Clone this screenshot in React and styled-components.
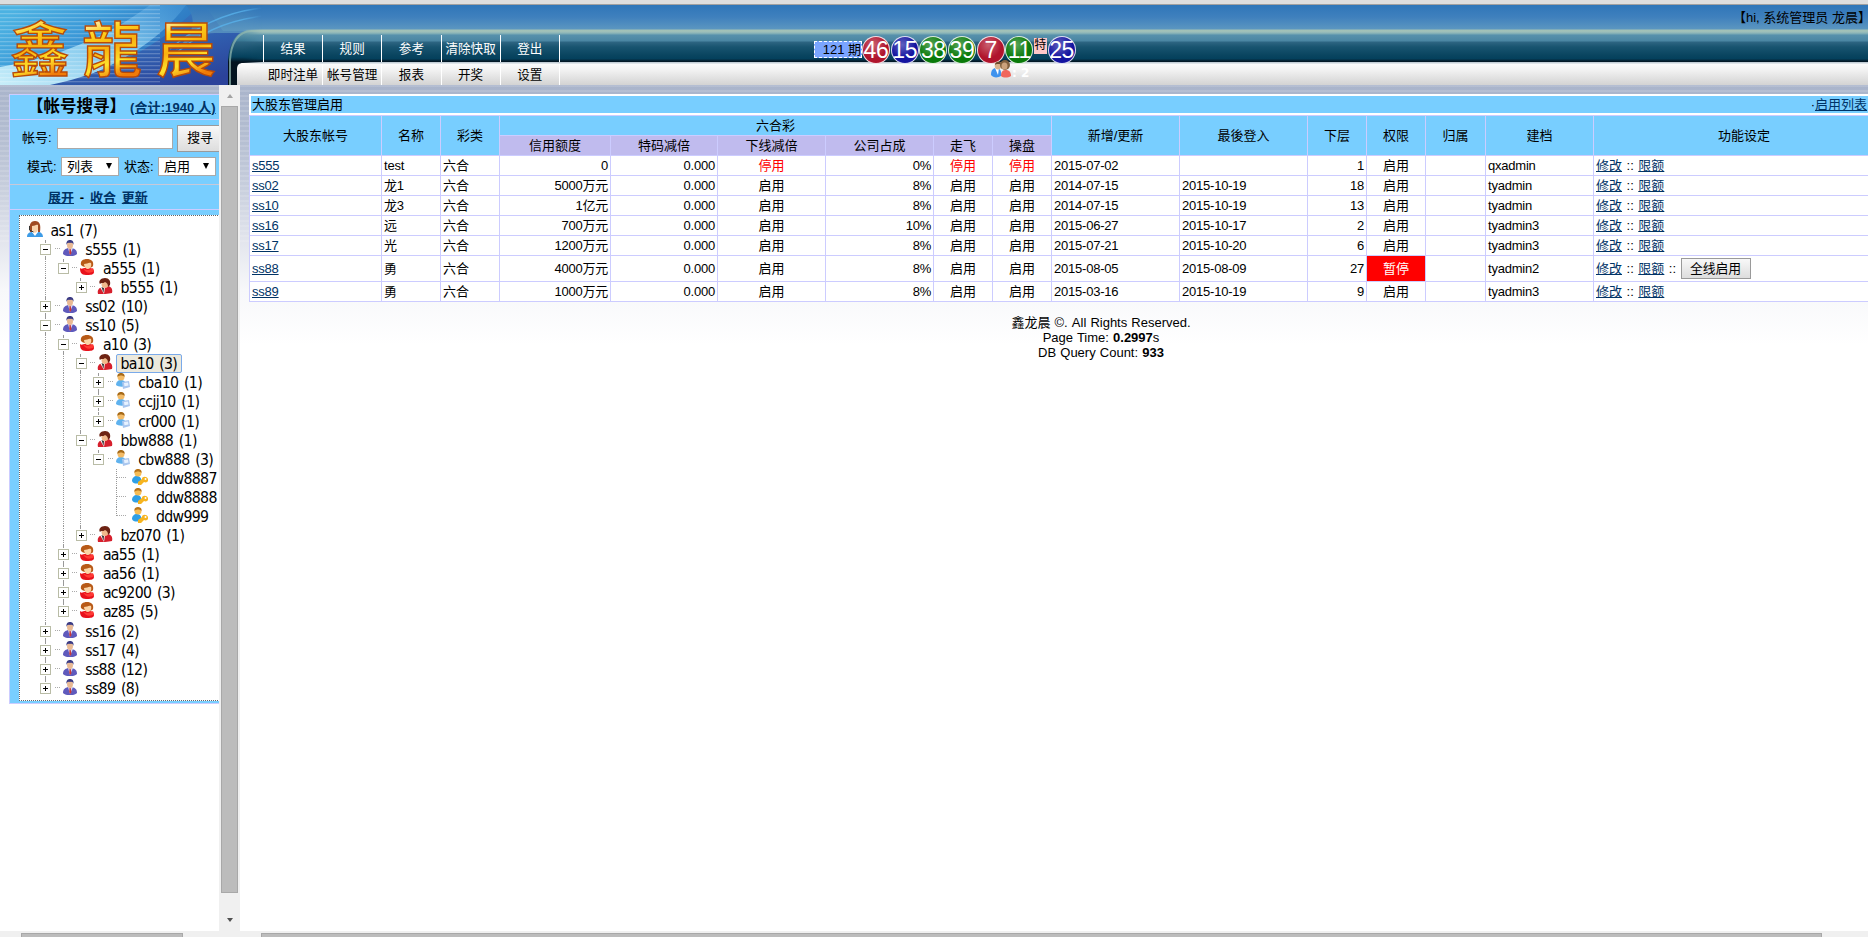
import React from 'react';
import styled, { createGlobalStyle, css } from 'styled-components';

const GlobalStyle = createGlobalStyle`
  * { box-sizing: border-box; }
  body {
    margin: 0;
    overflow: hidden;
    font: 13px/16px "Liberation Sans", "Noto Sans CJK SC", sans-serif;
    color: #000;
  }
`;

const Page = styled.div`
  width: 1868px;
  height: 937px;
  overflow: hidden;
  display: flex;
  flex-direction: column;
  background: #fff;
`;

/* ---------- header ---------- */
const TopEdge = styled.div`
  height: 5px;
  flex: none;
  background: #dedede;
  border-bottom: 1px solid #a0a0a0;
`;

const Header = styled.header`
  position: relative;
  height: 80px;
  flex: none;
  display: flex;
  background: linear-gradient(#2f76b9 0, #3f80bd 12px, #5b96c0 24px, #a3c2b6 25px, #9dbfba 27px, #78a9b4 29px, #5791ac 30px, #4a86a3 36px, #2e6582 37px, #185470 42px, #0a4560 50px, #04405c 54px, #052a3e 55px, #03131f 57px, #c3ced6 57px, #c3ced6 58px, #fbfbfb 59px, #f4f4f4 64px, #d3d3d3 80px);
`;

const LogoArt = styled.svg`
  display: block;
  overflow: visible;
  width: 263px;
  height: 80px;
  flex: none;
  mask: linear-gradient(90deg, #000 243px, transparent 262px);
`;

const Nav = styled.nav`
  display: flex;
  flex-direction: column;
  padding-top: 30px;
`;

const NavRow = styled.div`
  display: flex;
  height: ${(p) => (p.$sub ? 21 : 27)}px;
  margin-top: ${(p) => (p.$sub ? 2 : 0)}px;
  color: ${(p) => (p.$sub ? '#000' : '#fff')};
`;

const NavItem = styled.a`
  width: 59px;
  margin-right: 0.2px;
  border-left: 1px solid ${(p) => (p.$plain ? 'transparent' : '#fff')};
  display: flex;
  align-items: center;
  justify-content: center;
  white-space: nowrap;
  font-size: 12.6px;
`;

const NavEnd = styled.div`
  width: 1px;
  background: #fff;
`;

const Greeting = styled.div`
  position: absolute;
  left: 1733px;
  top: 5px;
  white-space: nowrap;
`;

const Draw = styled.div`
  position: absolute;
  left: 814px;
  top: 31px;
  display: flex;
  align-items: flex-start;
`;

const Issue = styled.div`
  width: 48px;
  height: 17px;
  margin-top: 5px;
  line-height: 15px;
  border: 1px dashed #fff;
  background: #7aa5ff;
  text-align: right;
`;

const ballColors = { red: '#b0142c', blue: '#1414a0', green: '#0a7a0a' };

const Ball = styled.div`
  width: 28px;
  height: 28px;
  margin-right: 0.7px;
  border-radius: 50%;
  border: 1px solid rgba(255, 255, 255, 0.85);
  background: radial-gradient(circle at 40% 30%, rgba(255, 255, 255, 0.32), rgba(255, 255, 255, 0) 55%), ${(p) => ballColors[p.$color]};
  color: #fff;
  font-size: 23px;
  line-height: 27px;
  letter-spacing: -0.3px;
  display: flex;
  justify-content: center;
`;

const Special = styled.div`
  width: 13px;
  height: 16px;
  flex: none;
  margin: 2px 0.5px 0 0;
  font-size: 12px;
  line-height: 15px;
  background: #ffc8c8;
`;

const Online = styled.div`
  position: absolute;
  left: 990px;
  top: 55px;
  display: flex;
  color: #fff;
  font: bold 12px/26px "DejaVu Sans", sans-serif;
`;

/* ---------- frames ---------- */
const Frames = styled.div`
  flex: 1;
  min-height: 0;
  display: flex;
`;

const frameBackground = css`
  background:
    repeating-linear-gradient(rgba(255, 255, 255, 0.13) 0 2px, rgba(255, 255, 255, 0) 2px 5px) 0 0 / 100% 160px no-repeat,
    linear-gradient(#a9b4cb 0, #b3bdd1 50px, #c6cddc 100px, #e2e5ed 155px, #f7f8fa 205px, #fff 260px);
`;

const LeftFrame = styled.aside`
  width: 240px;
  flex: none;
  display: flex;
  flex-direction: column;
`;

const LeftTop = styled.div`
  flex: 1;
  min-height: 0;
  display: flex;
`;

const LeftView = styled.div`
  width: 219px;
  overflow: hidden;
  padding: 9px 0 0 9px;
  ${frameBackground}
`;

const RightFrame = styled.main`
  width: 1628px;
  display: flex;
  flex-direction: column;
`;

const RightView = styled.div`
  flex: 1;
  overflow: hidden;
  padding: 9px 0 0 9px;
  ${frameBackground}
`;

const VBar = styled.div`
  width: 21px;
  background: #f0f0f0;
  display: flex;
  flex-direction: column;
  align-items: center;
  padding: 9px 0;
`;

const VThumb = styled.div`
  width: 17px;
  height: 787px;
  flex: none;
  margin: 8px 0 25px;
  background: #bcbcbc;
  border: 1px solid #a8a8a8;
`;

const Arrow = styled.div`
  border: 3.5px solid transparent;
  border-${(p) => (p.$up ? 'bottom' : 'top')}: 4px solid ${(p) => (p.$up ? '#a3a3a3' : '#505050')};
  border-${(p) => (p.$up ? 'top' : 'bottom')}: 0;
`;

const HBar = styled.div`
  height: 6px;
  flex: none;
  background: #f0f0f0;
  padding: 2px 0 0 21px;
  overflow: hidden;
`;

const HThumb = styled.div`
  width: ${(p) => p.$width}px;
  height: 12px;
  background: #bcbcbc;
  border: 1px solid #a8a8a8;
`;

/* ---------- search panel ---------- */
const Panel = styled.div`
  width: 240px;
  height: 610px;
  border: 1px solid #ccccff;
  background: #78ceff;
`;

const link = css`
  color: #003366;
  text-decoration: underline;
`;

const PanelTitle = styled.div`
  height: 25px;
  border-bottom: 1px solid #ccccff;
  display: flex;
  align-items: center;
  white-space: nowrap;
  font-weight: bold;
  font-size: 16.5px;
  padding: 0 0 3px 17px;
`;

const Total = styled.a`
  ${link}
  font-size: 13px;
  margin: 4px 0 0 4px;
  letter-spacing: 0.1px;
`;

const Form = styled.div`
  height: 65px;
  border-bottom: 1px solid #c8c8d8;
  padding-top: 4px;
`;

const FormRow = styled.div`
  display: flex;
  align-items: center;
  height: ${(p) => p.$height}px;
  padding-left: ${(p) => p.$left}px;
  white-space: nowrap;
`;

const Label = styled.span`
  width: ${(p) => p.$width}px;
`;

const Field = styled.div`
  width: 116px;
  height: 21px;
  background: #fff;
  border: 1px solid #a9a9a9;
`;

const Button = styled.div`
  height: ${(p) => p.$height}px;
  width: ${(p) => p.$width}px;
  display: flex;
  align-items: center;
  justify-content: center;
  font-size: 12.8px;
  border: 1px solid #9a9a9a;
  background: linear-gradient(#f8f8f8, #ddd);
`;

const Select = styled.div`
  width: 58px;
  height: 19px;
  background: #fff;
  border: 1px solid #a9a9a9;
  display: flex;
  align-items: center;
  justify-content: space-between;
  padding: 0 6px 0 5px;
`;

const Caret = styled.i`
  border: 3.5px solid transparent;
  border-top: 6px solid #000;
  border-bottom: 0;
  margin-top: -2px;
`;

const PanelLinks = styled.div`
  height: 25px;
  border-bottom: 1px solid #ccccff;
  padding-left: 38px;
  line-height: 26px;
  font-weight: bold;
  word-spacing: 2.2px;
  a { ${link} }
`;

/* ---------- tree ---------- */
const Tree = styled.div`
  margin: 5px 0 0 9px;
  height: 486px;
  border: 1px dotted #666;
  border-right: 0;
  background: #fff;
  padding: 5px 0 0 7px;
`;

const TreeRow = styled.div`
  display: flex;
  align-items: center;
  height: ${(p) => (p.$tall ? 20 : 19)}px;
  padding-top: ${(p) => (p.$tall ? 1 : 0)}px;
  padding-left: ${(p) => (p.$root ? 0 : 10)}px;
`;

const Guide = styled.span`
  width: 17.7px;
  height: 100%;
  flex: none;
  display: flex;
  align-items: center;
  justify-content: center;
  background: linear-gradient(#999, #999) 8px 0 / 1px ${(p) => p.$line} no-repeat;
  mask: ${(p) => (p.$toggle ? 'none' : 'repeating-linear-gradient(#000 0 1px, transparent 1px 2px)')};
`;

const ToggleBox = styled.span`
  position: relative;
  width: 11px;
  height: 11px;
  margin: 0 0 1px 0;
  background: #fff;
  border: 1px solid #b9bca6;
  outline: 1px solid #fff;
  &::before, &::after {
    content: "";
    position: absolute;
    background: #000;
  }
  &::before { left: 2px; top: 4px; width: 5px; height: 1px; }
  &::after { left: 4px; top: 2px; width: 1px; height: ${(p) => (p.$open ? 0 : 5)}px; }
`;

const Dash = styled.span`
  width: 7px;
  flex: none;
  height: 1px;
  margin: -2px 0 0 ${(p) => (p.$leaf ? -8 : 0)}px;
  padding-right: ${(p) => (p.$leaf ? 15 : 7)}px;
  background: repeating-linear-gradient(90deg, #aaa 0 1px, transparent 1px 2px) 0 0 / ${(p) => (p.$leaf ? 10 : 5)}px 1px no-repeat;
`;

const TreeIcon = styled.svg`
  width: 16px;
  height: 16px;
  flex: none;
  margin-top: -3px;
`;

const NodeLabel = styled.span`
  height: 19px;
  line-height: 17px;
  margin-left: 3px;
  padding: 0 3.5px;
  border: 1px solid ${(p) => (p.$selected ? '#7aaaea' : 'transparent')};
  border-radius: 2px;
  background: ${(p) => (p.$selected ? '#ece9dd' : 'transparent')};
  font-family: Tahoma, "DejaVu Sans Condensed", "DejaVu Sans", sans-serif;
  font-stretch: condensed;
  font-size: 15.7px;
  letter-spacing: -0.65px;
  word-spacing: 1.8px;
  white-space: nowrap;
`;

/* ---------- accounts table ---------- */
const Caption = styled.div`
  width: 1646px;
  height: 21px;
  border: 2px solid #fff;
  background: #78ceff;
  display: flex;
  justify-content: space-between;
  padding: 0 26px 0 1px;
  line-height: 17px;
  a { ${link} }
`;

const columns = '132px 59px 59px 111px 107px 108px 108px 59px 59px 128px 128px 59px 59px 60px 108px 301px';

const Sheet = styled.div`
  width: 1646px;
  border: 1px solid #ccccff;
  border-width: 1px 0 0 1px;
`;

const HeadGrid = styled.div`
  display: grid;
  grid-template-columns: ${columns};
  grid-template-rows: 20px 20px;
`;

const HeadCell = styled.div`
  display: flex;
  align-items: center;
  justify-content: center;
  border: 1px solid #ccccff;
  border-width: 0 1px 1px 0;
  grid-row: ${(p) => (p.$row ? p.$row : 'span 2')};
  grid-column: ${(p) => p.$col};
  background: ${(p) => (p.$row === 2 ? '#c0bbee' : '#78ceff')};
`;

const Row = styled.div`
  display: grid;
  grid-template-columns: ${columns};
  height: ${(p) => (p.$tall ? 26 : 20)}px;
`;

const Cell = styled.div`
  display: flex;
  align-items: center;
  justify-content: ${(p) => p.$align || 'flex-start'};
  border: 1px solid #ccccff;
  border-width: 0 1px 1px 0;
  padding: 0 2px;
  white-space: pre;
  color: ${(p) => p.$color || '#000'};
  background: ${(p) => p.$bg || '#fff'};
  letter-spacing: ${(p) => (p.$wide ? 0 : -0.22)}px;
  word-spacing: 0.9px;
  a { ${link} }
`;

const Footer = styled.footer`
  margin-top: 13px;
  width: 1704px;
  line-height: 15px;
  text-align: center;
  word-spacing: 0.5px;
`;

/* ---------- icons ---------- */
function Agent() {
  return (
    <TreeIcon viewBox="0 0 16 16">
      <path d="M0 16c0-4 3-5 5-5l3 2 3-2c3 0 5 2 5 5z" fill="#3d9be6" />
      <path d="M5 11l3 4 3-4z" fill="#fff" />
      <path d="M3 11C2 4 3 0 8 0s6 4 5 11l-2 0V5H5v6z" fill="#a04a22" />
      <path d="M5 5c3 0 4-2 6-1v4c0 5-6 5-6 0z" fill="#f9d3ac" />
      <path d="M2.500 5v4l4 2" stroke="#333" fill="none" />
    </TreeIcon>
  );
}

function Manager() {
  return (
    <TreeIcon viewBox="0 0 16 16">
      <path d="M1 14c0-4 2-5 5-6h4c3 1 5 2 5 6-3 3-11 3-14 0z" fill="#5f5abc" />
      <path d="M6 8l2 7 3-7z" fill="#d8dcf8" />
      <path d="M7.500 9h1.200l.8 4-1.300 2-1-2z" fill="#c93838" />
      <ellipse cx="8" cy="5" rx="3" ry="4" fill="#e9b994" />
      <path d="M4.500 5C4 1 6 0 8 0s4 1 3.500 5C11 3 10 2.500 8 3 6 2.500 5 3 4.500 5z" fill="#3b3b84" />
    </TreeIcon>
  );
}

function Lady() {
  return (
    <TreeIcon viewBox="0 0 16 16">
      <path d="M1 9c2 2 4-1 7 0 4 0 7 0 7 4 0 3-4 3-8 3-5 0-6-3-6-7z" fill="#e8121c" />
      <path d="M2 6C1 2 4 0 8 0s7 2 6 7c-1 3-9 2-12-1z" fill="#b85a17" />
      <path d="M5 5c3 0 5-2 7-1 1 3-1 6-3 6S5 8 5 5z" fill="#fbd4a6" />
      <path d="M4 9c3 3 7 2 10 0l1 3c-4 3-9 2-11-3z" fill="#ff3a34" />
    </TreeIcon>
  );
}

function Gentleman() {
  return (
    <TreeIcon viewBox="0 0 16 16">
      <path d="M1 16c-1-4 1-6 4-7l5-1c4 0 6 3 5 7-3 1-11 1-14 1z" fill="#d61f2c" />
      <path d="M3 9l4 7 1-7z" fill="#fff" />
      <path d="M4.500 9l2 6 .5-5z" fill="#333" />
      <ellipse cx="8" cy="6" rx="3.500" ry="4" fill="#f0b98c" />
      <path d="M3 6C1 3 4 0 8 0s6 3 5 7l-2 2c0-3-1-4-3-5-2 2-4 0-5 2z" fill="#6d2313" />
    </TreeIcon>
  );
}

function Clerk() {
  return (
    <TreeIcon viewBox="0 0 16 16">
      <path d="M1 12c0-3 2-5 5-5s5 2 5 6c-3 1-8 1-10-1z" fill="#5fb2ee" />
      <circle cx="6" cy="4" r="3.500" fill="#f3bb67" />
      <path d="M2.500 4C2 1 4 0 6 0s4 1 3.500 4C8 2 4 2 2.500 4z" fill="#a66a18" />
      <path d="M7 9l7-1 1 6-7 2z" fill="#a9c6ee" />
      <path d="M9 10l4-.5.500 3-4 .8z" fill="#e8f2ff" />
    </TreeIcon>
  );
}

function KeyUser() {
  return (
    <TreeIcon viewBox="0 0 16 16">
      <path d="M0 12c0-3 2-5 5-5s5 2 4 7c-4 1-8 1-9-2z" fill="#2f9fe6" />
      <circle cx="6" cy="4" r="3.500" fill="#f7bd55" />
      <path d="M2.500 4C2 1 4 0 6 0s4 1 3.500 4C8 2 4 2 2.500 4z" fill="#b9741a" />
      <path d="M6 13l4-3c0-3 5-3 6 0s-2 4-4 3l-3 3H6z" fill="#f6b41f" />
      <circle cx="13.500" cy="10" r="1" fill="#fff" />
    </TreeIcon>
  );
}

function OnlineIcon() {
  return (
    <svg width="22" height="18" viewBox="0 0 22 18">
      <path d="M1 15c0-5 2-7 5-7s6 2 5 8c-3 2-8 2-10-1z" fill="#3f93ee" />
      <path d="M5 8l3 7 1-7z" fill="#fff" />
      <ellipse cx="8" cy="5.500" rx="3.300" ry="4" fill="#d9b38d" />
      <path d="M5 5c0-4 6-4 7-1-2 1-5-1-7 1z" fill="#6b4a2c" />
      <path d="M11 16c0-5 2-6 5-6s5 2 5 6c-3 2-8 2-10 0z" fill="#f0665c" />
      <circle cx="15" cy="5" r="5" fill="#80603f" />
      <ellipse cx="14.500" cy="6" rx="3" ry="3.600" fill="#cba27c" />
    </svg>
  );
}

const icons = { root: Agent, s: Manager, a: Lady, b: Gentleman, c: Clerk, d: KeyUser };

/* guides: "|" continues a branch, "." leaves the column empty */
const nodes = [
  { icon: 'root', label: 'as1 (7)' },
  { guides: '', open: true, icon: 's', label: 's555 (1)' },
  { guides: '|', open: true, icon: 'a', label: 'a555 (1)', last: true },
  { guides: '|.', icon: 'b', label: 'b555 (1)', last: true },
  { guides: '', icon: 's', label: 'ss02 (10)' },
  { guides: '', open: true, icon: 's', label: 'ss10 (5)' },
  { guides: '|', open: true, icon: 'a', label: 'a10 (3)' },
  { guides: '||', open: true, icon: 'b', label: 'ba10 (3)', selected: true },
  { guides: '|||', icon: 'c', label: 'cba10 (1)' },
  { guides: '|||', icon: 'c', label: 'ccjj10 (1)' },
  { guides: '|||', icon: 'c', label: 'cr000 (1)', last: true, tall: true },
  { guides: '||', open: true, icon: 'b', label: 'bbw888 (1)' },
  { guides: '|||', open: true, icon: 'c', label: 'cbw888 (3)', last: true },
  { guides: '|||.', leaf: true, icon: 'd', label: 'ddw8887' },
  { guides: '|||.', leaf: true, icon: 'd', label: 'ddw8888' },
  { guides: '|||.', leaf: true, icon: 'd', label: 'ddw999', last: true },
  { guides: '||', icon: 'b', label: 'bz070 (1)', last: true },
  { guides: '|', icon: 'a', label: 'aa55 (1)' },
  { guides: '|', icon: 'a', label: 'aa56 (1)' },
  { guides: '|', icon: 'a', label: 'ac9200 (3)' },
  { guides: '|', icon: 'a', label: 'az85 (5)', last: true },
  { guides: '', icon: 's', label: 'ss16 (2)', tall: true },
  { guides: '', icon: 's', label: 'ss17 (4)' },
  { guides: '', icon: 's', label: 'ss88 (12)' },
  { guides: '', icon: 's', label: 'ss89 (8)', last: true },
];

function TreeNode({ node }) {
  const Icon = icons[node.icon];
  const root = node.icon === 'root';
  return (
    <TreeRow $root={root} $tall={node.tall}>
      {!root && (
        <>
          {[...node.guides].map((g, i) => (
            <Guide key={i} $line={g === '|' ? '100%' : '0'} />
          ))}
          <Guide $toggle={!node.leaf} $line={node.last ? '50%' : '100%'}>
            {!node.leaf && <ToggleBox $open={node.open} />}
          </Guide>
          <Dash $leaf={node.leaf} />
        </>
      )}
      <Icon />
      <NodeLabel $selected={node.selected}>{node.label}</NodeLabel>
    </TreeRow>
  );
}

const accounts = [
  ['s555', 'test', '0', '停用', '0%', '2015-07-02', '', '1', 'qxadmin'],
  ['ss02', '龙1', '5000万元', '启用', '8%', '2014-07-15', '2015-10-19', '18', 'tyadmin'],
  ['ss10', '龙3', '1亿元', '启用', '8%', '2014-07-15', '2015-10-19', '13', 'tyadmin'],
  ['ss16', '远', '700万元', '启用', '10%', '2015-06-27', '2015-10-17', '2', 'tyadmin3'],
  ['ss17', '光', '1200万元', '启用', '8%', '2015-07-21', '2015-10-20', '6', 'tyadmin3'],
  ['ss88', '勇', '4000万元', '启用', '8%', '2015-08-05', '2015-08-09', '27', 'tyadmin2', true],
  ['ss89', '勇', '1000万元', '启用', '8%', '2015-03-16', '2015-10-19', '9', 'tyadmin3'],
];

function AccountRow({ data }) {
  const [id, name, credit, state, share, updated, login, lower, creator, paused] = data;
  const stateColor = state === '停用' ? '#f00' : '#000';
  return (
    <Row $tall={paused}>
      <Cell><a>{id}</a></Cell>
      <Cell>{name}</Cell>
      <Cell $wide>六合</Cell>
      <Cell $align="flex-end">{credit}</Cell>
      <Cell $align="flex-end">0.000</Cell>
      <Cell $wide $align="center" $color={stateColor}>{state}</Cell>
      <Cell $align="flex-end">{share}</Cell>
      <Cell $wide $align="center" $color={stateColor}>{state}</Cell>
      <Cell $wide $align="center" $color={stateColor}>{state}</Cell>
      <Cell>{updated}</Cell>
      <Cell>{login}</Cell>
      <Cell $align="flex-end">{lower}</Cell>
      <Cell $wide $align="center" $color={paused ? '#fff' : '#000'} $bg={paused ? '#f00' : '#fff'}>
        {paused ? '暂停' : '启用'}
      </Cell>
      <Cell />
      <Cell>{creator}</Cell>
      <Cell $wide>
        <a>修改</a>{' :: '}<a>限额</a>
        {paused && <>{' :: '}<Button $width={70} $height={21}>全线启用</Button></>}
      </Cell>
    </Row>
  );
}

function Logo() {
  return (
    <LogoArt viewBox="0 0 263 80">
      <defs>
        <linearGradient id="sky" x1="0" y1="0.2" x2="1" y2="0.6">
          <stop offset="0" stopColor="#4cb2e2" />
          <stop offset="0.3" stopColor="#3c9ad8" />
          <stop offset="0.6" stopColor="#2f7cc4" />
          <stop offset="1" stopColor="#2f76b9" />
        </linearGradient>
        <linearGradient id="deep" x1="0" y1="0" x2="0.7" y2="1">
          <stop offset="0" stopColor="#3a8fd2" />
          <stop offset="1" stopColor="#2b429a" />
        </linearGradient>
        <linearGradient id="fade" x1="0" y1="0" x2="0" y2="25" gradientUnits="userSpaceOnUse">
          <stop offset="0" stopColor="#2f76b9" />
          <stop offset="1" stopColor="#5b96c0" />
        </linearGradient>
        <linearGradient id="pale" x1="0" y1="1" x2="1" y2="0">
          <stop offset="0" stopColor="#c8eefa" />
          <stop offset="0.6" stopColor="#86cdf0" stopOpacity="0.85" />
          <stop offset="1" stopColor="#4c9cdc" stopOpacity="0.4" />
        </linearGradient>
        <linearGradient id="bar" x1="0" y1="24" x2="0" y2="57" gradientUnits="userSpaceOnUse">
          <stop offset="0" stopColor="#78a9b4" />
          <stop offset="0.35" stopColor="#3b7a96" />
          <stop offset="0.4" stopColor="#2e6582" />
          <stop offset="0.85" stopColor="#04405c" />
          <stop offset="1" stopColor="#03131f" />
        </linearGradient>
        <linearGradient id="sub" x1="0" y1="0" x2="0" y2="1">
          <stop offset="0" stopColor="#fff" />
          <stop offset="1" stopColor="#d3d3d3" />
        </linearGradient>
        <linearGradient id="gold" x1="0" y1="0" x2="0.25" y2="1">
          <stop offset="0.2" stopColor="#fff4e4" />
          <stop offset="0.4" stopColor="#ffd21c" />
          <stop offset="0.6" stopColor="#f8b010" />
          <stop offset="0.78" stopColor="#ffe22c" />
          <stop offset="0.95" stopColor="#f07a08" />
        </linearGradient>
        <pattern id="scan" width="4" height="4" patternUnits="userSpaceOnUse">
          <rect width="4" height="1.300" fill="#fff" opacity="0.22" />
        </pattern>
      </defs>
      <rect width="263" height="80" fill="url(#sky)" />
      <path d="M0 80V62C60 52 110 30 150 0h36C160 36 110 66 60 80z" fill="url(#pale)" />
      <path d="M50 80C110 68 160 40 196 4L250 10V80z" fill="url(#deep)" />
      <rect width="160" height="80" fill="url(#scan)" />
      <path d="M186 0h77v28h-48c-12 0-24 6-40 18C190 32 200 18 186 0z" fill="url(#fade)" opacity="0.8" />
      <path d="M205 0h58v26h-40z" fill="url(#fade)" />
      <path d="M170 44C200 18 232 6 263 3M176 48C204 24 236 14 263 11" stroke="#5ab4ee" strokeWidth="1.500" fill="none" opacity="0.75" />
      <path d="M228 80V55C229 38 236 25 252 25h11v55z" fill="url(#bar)" />
      <path d="M230 80V55C231 38 238 26 252 26h11" stroke="#8fb5ad" strokeWidth="2" fill="none" opacity="0.75" />
      <path d="M233 80V50c1-12 6-19 17-21h13v28H240l-3 23z" fill="url(#bar)" />
      <path d="M237 80V64c0-4 2-6 6-6h20v22z" fill="url(#sub)" />
      <g fontFamily="Noto Sans CJK TC" fontWeight="500" fontSize="60" textAnchor="middle" fill="url(#gold)" stroke="#b84a08" strokeWidth="1.400">
        <text x="40" y="67">鑫</text>
        <text x="112" y="67">龍</text>
        <text x="186" y="67">晨</text>
      </g>
    </LogoArt>
  );
}

const balls = [[46, 'red'], [15, 'blue'], [38, 'green'], [39, 'green'], [7, 'red'], [11, 'green']];
const mainNav = ['结果', '规则', '参考', '清除快取', '登出'];
const subNav = ['即时注单', '帐号管理', '报表', '开奖', '设置'];
const subHeads = ['信用额度', '特码减倍', '下线减倍', '公司占成', '走飞', '操盘'];
const tailHeads = ['新增/更新', '最後登入', '下层', '权限', '归属', '建档', '功能设定'];

export default function App() {
  return (
    <Page>
      <GlobalStyle />
      <TopEdge />
      <Header>
        <Logo />
        <Nav>
          <NavRow>
            {mainNav.map((t) => <NavItem key={t}>{t}</NavItem>)}
            <NavEnd />
          </NavRow>
          <NavRow $sub>
            {subNav.map((t, i) => <NavItem key={t} $sub $plain={i === 0}>{t}</NavItem>)}
            <NavEnd />
          </NavRow>
        </Nav>
        <Draw>
          <Issue>121 期</Issue>
          {balls.map(([n, c]) => <Ball key={n} $color={c}>{n}</Ball>)}
          <Special>特</Special>
          <Ball $color="blue">25</Ball>
        </Draw>
        <Online><OnlineIcon />: 2</Online>
        <Greeting>【hi, 系统管理员 龙晨】</Greeting>
      </Header>
      <Frames>
        <LeftFrame>
          <LeftTop>
            <LeftView>
              <Panel>
                <PanelTitle>【帐号搜寻】<Total>(合计:1940 人)</Total></PanelTitle>
                <Form>
                  <FormRow $height={28} $left={12}>
                    <Label $width={35}>帐号:</Label>
                    <Field />
                    <Label $width={4} />
                    <Button $width={46} $height={27}>搜寻</Button>
                  </FormRow>
                  <FormRow $height={29} $left={17}>
                    <Label $width={34}>模式:</Label>
                    <Select>列表<Caret /></Select>
                    <Label $width={5} />
                    <Label $width={34}>状态:</Label>
                    <Select>启用<Caret /></Select>
                  </FormRow>
                </Form>
                <PanelLinks><a>展开</a> - <a>收合</a> <a>更新</a></PanelLinks>
                <Tree>
                  {nodes.map((n) => <TreeNode key={n.label} node={n} />)}
                </Tree>
              </Panel>
            </LeftView>
            <VBar>
              <Arrow $up />
              <VThumb />
              <Arrow />
            </VBar>
          </LeftTop>
          <HBar><HThumb $width={162} /></HBar>
        </LeftFrame>
        <RightFrame>
          <RightView>
            <Caption><span>大股东管理启用</span><span>·<a>启用列表</a></span></Caption>
            <Sheet>
              <HeadGrid>
                <HeadCell $col="1">大股东帐号</HeadCell>
                <HeadCell $col="2">名称</HeadCell>
                <HeadCell $col="3">彩类</HeadCell>
                <HeadCell $row={1} $col="4 / 10">六合彩</HeadCell>
                {subHeads.map((t, i) => <HeadCell key={t} $row={2} $col={String(i + 4)}>{t}</HeadCell>)}
                {tailHeads.map((t, i) => <HeadCell key={t} $row="1 / span 2" $col={String(i + 10)}>{t}</HeadCell>)}
              </HeadGrid>
              {accounts.map((a) => <AccountRow key={a[0]} data={a} />)}
            </Sheet>
            <Footer>
              鑫龙晨 ©. All Rights Reserved.<br />
              Page Time: <b>0.2997</b>s<br />
              DB Query Count: <b>933</b>
            </Footer>
          </RightView>
          <HBar><HThumb $width={1561} /></HBar>
        </RightFrame>
      </Frames>
    </Page>
  );
}
